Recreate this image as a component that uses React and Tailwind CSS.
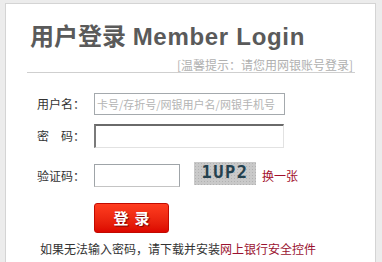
import React from "react";

const cjk = { fontFamily: '"Noto Sans CJK SC", "Liberation Sans", sans-serif' };
const title = { fontFamily: '"Liberation Sans", "Noto Sans CJK SC", sans-serif' };

export default function App() {
  return (
    <div className="w-[382px] h-[262px] overflow-hidden bg-[#ececec] pt-[3px] pl-[5px]" style={cjk}>
      <div className="w-[371px] h-[280px] border border-[#d4d4d4] bg-white flex flex-col">
        <div className="ml-[21px] mr-[20px] mt-[17px] border-b border-[#cfcfcf] flex flex-col">
          <div className="ml-[3px] text-[24px] leading-[28px] font-bold text-[#5a5a5a] whitespace-nowrap" style={title}>
            <span style={cjk}>用户登录</span> <span className="tracking-[0.7px]">Member Login</span>
          </div>
          <div className="mt-[7px] mr-[2px] self-end text-[12px] leading-[14px] text-[#b0b0b0] whitespace-nowrap">
            [温馨提示：请您用网银账号登录]
          </div>
        </div>

        <div className="pl-[31px] flex flex-col">
          <div className="mt-[20px] flex items-center h-[22px]">
            <div className="w-[57px] text-[12px] text-[#333]">用户名：</div>
            <div className="w-[191px] h-[22px] border border-[#a4a9ad] flex items-center pl-[2px] text-[11px] text-[#b4b4b4] whitespace-nowrap overflow-hidden">
              卡号/存折号/网银用户名/网银手机号
            </div>
          </div>

          <div className="mt-[9px] flex items-center h-[24px]">
            <div className="w-[57px] text-[12px] text-[#333] whitespace-pre">密　码：</div>
            <div className="w-[190px] h-[24px] border-t-2 border-l-2 border-r border-b border-t-[#6a6a6a] border-l-[#7a7a7a] border-r-[#e2e2e2] border-b-[#e2e2e2]" />
          </div>

          <div className="mt-[16px] flex items-center h-[23px]">
            <div className="w-[57px] text-[12px] text-[#333]">验证码：</div>
            <div className="w-[86px] h-[23px] border border-[#9fa4a8] border-b-[#c4c4c4]" />
            <div
              className="ml-[14px] -mt-[5px] w-[62px] h-[23px] bg-[#c9c9c9] flex items-center justify-center text-[17px] font-bold tracking-[1.5px] text-[#24414f]"
              style={{ fontFamily: '"DejaVu Sans Mono", monospace', backgroundImage: "radial-gradient(#b2b2b2 0.6px, transparent 0.8px)", backgroundSize: "3px 3px" }}
            >
              1UP2
            </div>
            <div className="ml-[6px] text-[12px] text-[#a2102c]">换一张</div>
          </div>

          <div
            className="mt-[16px] ml-[57px] w-[75px] h-[30px] rounded-[3px] border border-[#c20a00] bg-gradient-to-b from-[#ff3d1f] to-[#dc0500] flex items-center justify-center text-white text-[15px] font-bold tracking-[6px] pl-[6px]"
            style={{ textShadow: "1px 1px 1px #7a0000" }}
          >
            登录
          </div>

          <div className="mt-[8px] ml-[3px] text-[12px] leading-[16px] text-[#333] whitespace-nowrap">
            如果无法输入密码，请下载并安装<span className="text-[#9a1230]">网上银行安全控件</span>
          </div>
        </div>
      </div>
    </div>
  );
}
